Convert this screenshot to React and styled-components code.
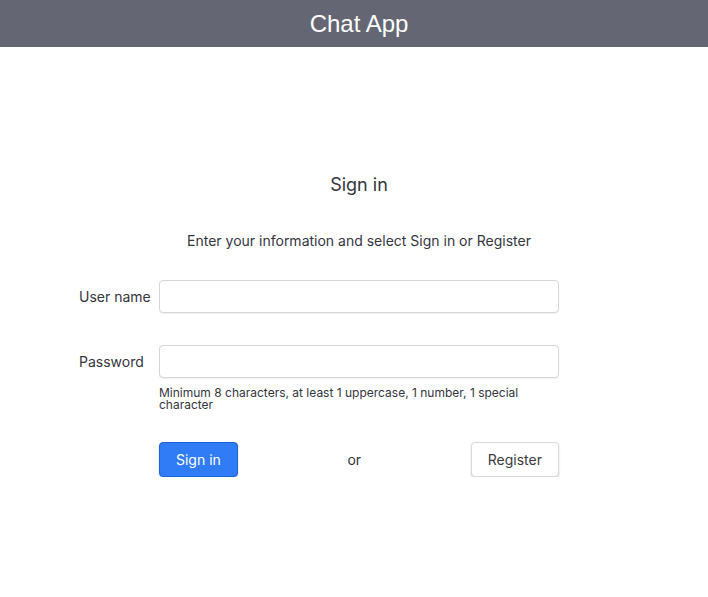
import React from 'react';
import styled, { createGlobalStyle } from 'styled-components';

const GlobalStyle = createGlobalStyle`
  body {
    margin: 0;
    background: #ffffff;
    font-family: Inter, "Liberation Sans", Arial, sans-serif;
    color: #34353d;
  }
`;

const Header = styled.header`
  height: 47px;
  background: #646773;
  display: flex;
  align-items: center;
  justify-content: center;
  padding-left: 10px;
  color: #ffffff;
  font-family: "Liberation Sans", Arial, sans-serif;
  font-size: 24px;
`;

const Main = styled.main`
  padding: 127px 0 0 79px;
`;

const Form = styled.form`
  display: grid;
  grid-template-columns: 80px 400px;
  align-items: center;
`;

const Title = styled.h1`
  grid-column: 2;
  margin: 0;
  text-align: center;
  font-size: 18px;
  font-weight: normal;
  line-height: 22px;
`;

const Subtitle = styled.p`
  grid-column: 2;
  margin: 35px 0 29px;
  text-align: center;
  font-size: 14px;
  line-height: 20px;
`;

const Label = styled.label`
  grid-column: 1;
  font-size: 14px;
  margin-top: ${p => p.$top || 0}px;
`;

const Input = styled.input`
  grid-column: 2;
  box-sizing: border-box;
  height: 33px;
  width: 100%;
  margin: ${p => p.$top || 0}px 0 0;
  border: 1px solid #d6d6d9;
  border-radius: 4px;
  box-shadow: 0 1px 1px rgba(0, 0, 0, 0.06);
  padding: 0 10px;
  font: inherit;
  outline: none;
`;

const Hint = styled.p`
  grid-column: 2;
  margin: 9px 0 0;
  font-size: 12px;
  line-height: 12px;
  padding-right: 30px;
`;

const Actions = styled.div`
  grid-column: 2;
  margin-top: 31px;
  display: flex;
  align-items: center;
  justify-content: space-between;
  font-size: 14px;
`;

const Button = styled.button`
  box-sizing: border-box;
  height: 35px;
  padding: 0 16px;
  border-radius: 4px;
  font: inherit;
  font-size: 14px;
  cursor: pointer;
  border: 1px solid ${p => (p.$primary ? '#1d63dc' : '#d9d9dc')};
  background: ${p => (p.$primary ? '#2f7cf6' : '#ffffff')};
  color: ${p => (p.$primary ? '#ffffff' : '#3a3b43')};
  box-shadow: 0 1px 2px rgba(0, 0, 0, 0.18);
`;

export default function App() {
  return (
    <>
      <GlobalStyle />
      <Header>Chat App</Header>
      <Main>
        <Form onSubmit={e => e.preventDefault()}>
          <Title>Sign in</Title>
          <Subtitle>Enter your information and select Sign in or Register</Subtitle>
          <Label htmlFor="user">User name</Label>
          <Input id="user" type="text" />
          <Label htmlFor="pass" $top={32}>Password</Label>
          <Input id="pass" type="password" $top={32} />
          <Hint>Minimum 8 characters, at least 1 uppercase, 1 number, 1 special character</Hint>
          <Actions>
            <Button $primary type="submit">Sign in</Button>
            <span>or</span>
            <Button type="button">Register</Button>
          </Actions>
        </Form>
      </Main>
    </>
  );
}
